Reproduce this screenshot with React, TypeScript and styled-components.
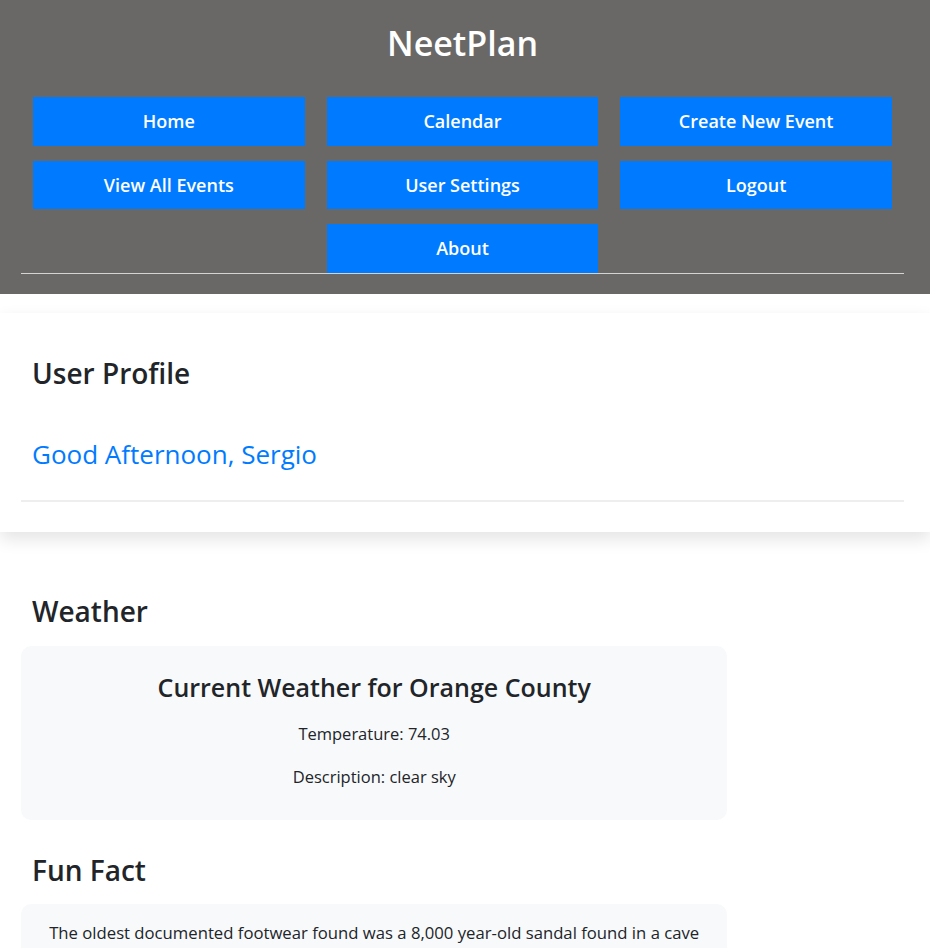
import React from "react";
import styled, { createGlobalStyle } from "styled-components";

const Global = createGlobalStyle`
  html, body { margin: 0; padding: 0; background: #ffffff; }
  body { font-family: "Open Sans", "Noto Sans", sans-serif; color: #212529; }
  * { box-sizing: border-box; }
`;

const Header = styled.header`
  background: #696866;
  padding: 16px 26px 20px 21px;
`;

const Title = styled.h1`
  margin: 0;
  height: 54px;
  line-height: 54px;
  text-align: center;
  color: #ffffff;
  font-size: 34px;
  font-weight: 600;
`;

const Nav = styled.nav`
  margin-top: 27px;
  padding: 0 12px;
  border-bottom: 1px solid #d4d4d4;
  display: grid;
  grid-template-columns: repeat(3, 1fr);
  column-gap: 22px;
  row-gap: 15px;
`;

const NavButton = styled.button<{ $col?: number }>`
  grid-column: ${(p) => (p.$col ? `${p.$col}` : "auto")};
  height: 48.5px;
  border: none;
  border-radius: 0;
  background: #007bff;
  color: #ffffff;
  font-family: inherit;
  font-size: 18px;
  font-weight: 600;
  cursor: pointer;
`;

const ProfileCard = styled.section`
  margin-top: 19px;
  padding: 43px 26px 30px 21px;
  background: #ffffff;
  box-shadow: 0 7px 16px rgba(0, 0, 0, 0.11);
`;

const SectionTitle = styled.h2<{ $top?: number }>`
  margin: ${(p) => p.$top ?? 0}px 0 0;
  padding-left: 11px;
  font-size: 28px;
  line-height: 34px;
  font-weight: 600;
  color: #212529;
`;

const Greeting = styled.h3`
  margin: 48px 0 0;
  padding-left: 11px;
  font-size: 26px;
  line-height: 32px;
  font-weight: 500;
  color: #007bff;
`;

const Rule = styled.hr`
  margin: 30px 0 0;
  border: none;
  border-top: 2px solid #eeeeee;
`;

const Main = styled.main`
  padding: 0 26px 0 21px;
`;

const InfoBox = styled.div<{ $top: number }>`
  width: 80%;
  margin-top: ${(p) => p.$top}px;
  background: #f8f9fa;
  border-radius: 10px;
  text-align: center;
`;

const WeatherBox = styled(InfoBox)`
  padding: 26px 16px 32px;
`;

const FactBox = styled(InfoBox)`
  padding: 18px 16px 20px;
`;

const BoxTitle = styled.h3`
  margin: 0;
  font-size: 25px;
  line-height: 30px;
  font-weight: 600;
  color: #212529;
`;

const BoxText = styled.p<{ $top: number }>`
  margin: ${(p) => p.$top}px 0 0;
  font-size: 16.5px;
  line-height: 22px;
  color: #212529;
`;

const FactText = styled(BoxText)`
  font-size: 16.7px;
`;

const navItems: { label: string; col?: number }[] = [
  { label: "Home" },
  { label: "Calendar" },
  { label: "Create New Event" },
  { label: "View All Events" },
  { label: "User Settings" },
  { label: "Logout" },
  { label: "About", col: 2 },
];

export default function App() {
  return (
    <>
      <Global />
      <Header>
        <Title>NeetPlan</Title>
        <Nav>
          {navItems.map((n) => (
            <NavButton key={n.label} $col={n.col}>
              {n.label}
            </NavButton>
          ))}
        </Nav>
      </Header>
      <ProfileCard>
        <SectionTitle>User Profile</SectionTitle>
        <Greeting>Good Afternoon, Sergio</Greeting>
        <Rule />
      </ProfileCard>
      <Main>
        <SectionTitle $top={62}>Weather</SectionTitle>
        <WeatherBox $top={18}>
          <BoxTitle>Current Weather for Orange County</BoxTitle>
          <BoxText $top={21}>Temperature: 74.03</BoxText>
          <BoxText $top={21}>Description: clear sky</BoxText>
        </WeatherBox>
        <SectionTitle $top={33}>Fun Fact</SectionTitle>
        <FactBox $top={17}>
          <FactText $top={0}>
            The oldest documented footwear found was a 8,000 year-old sandal found in a cave
          </FactText>
        </FactBox>
      </Main>
    </>
  );
}
